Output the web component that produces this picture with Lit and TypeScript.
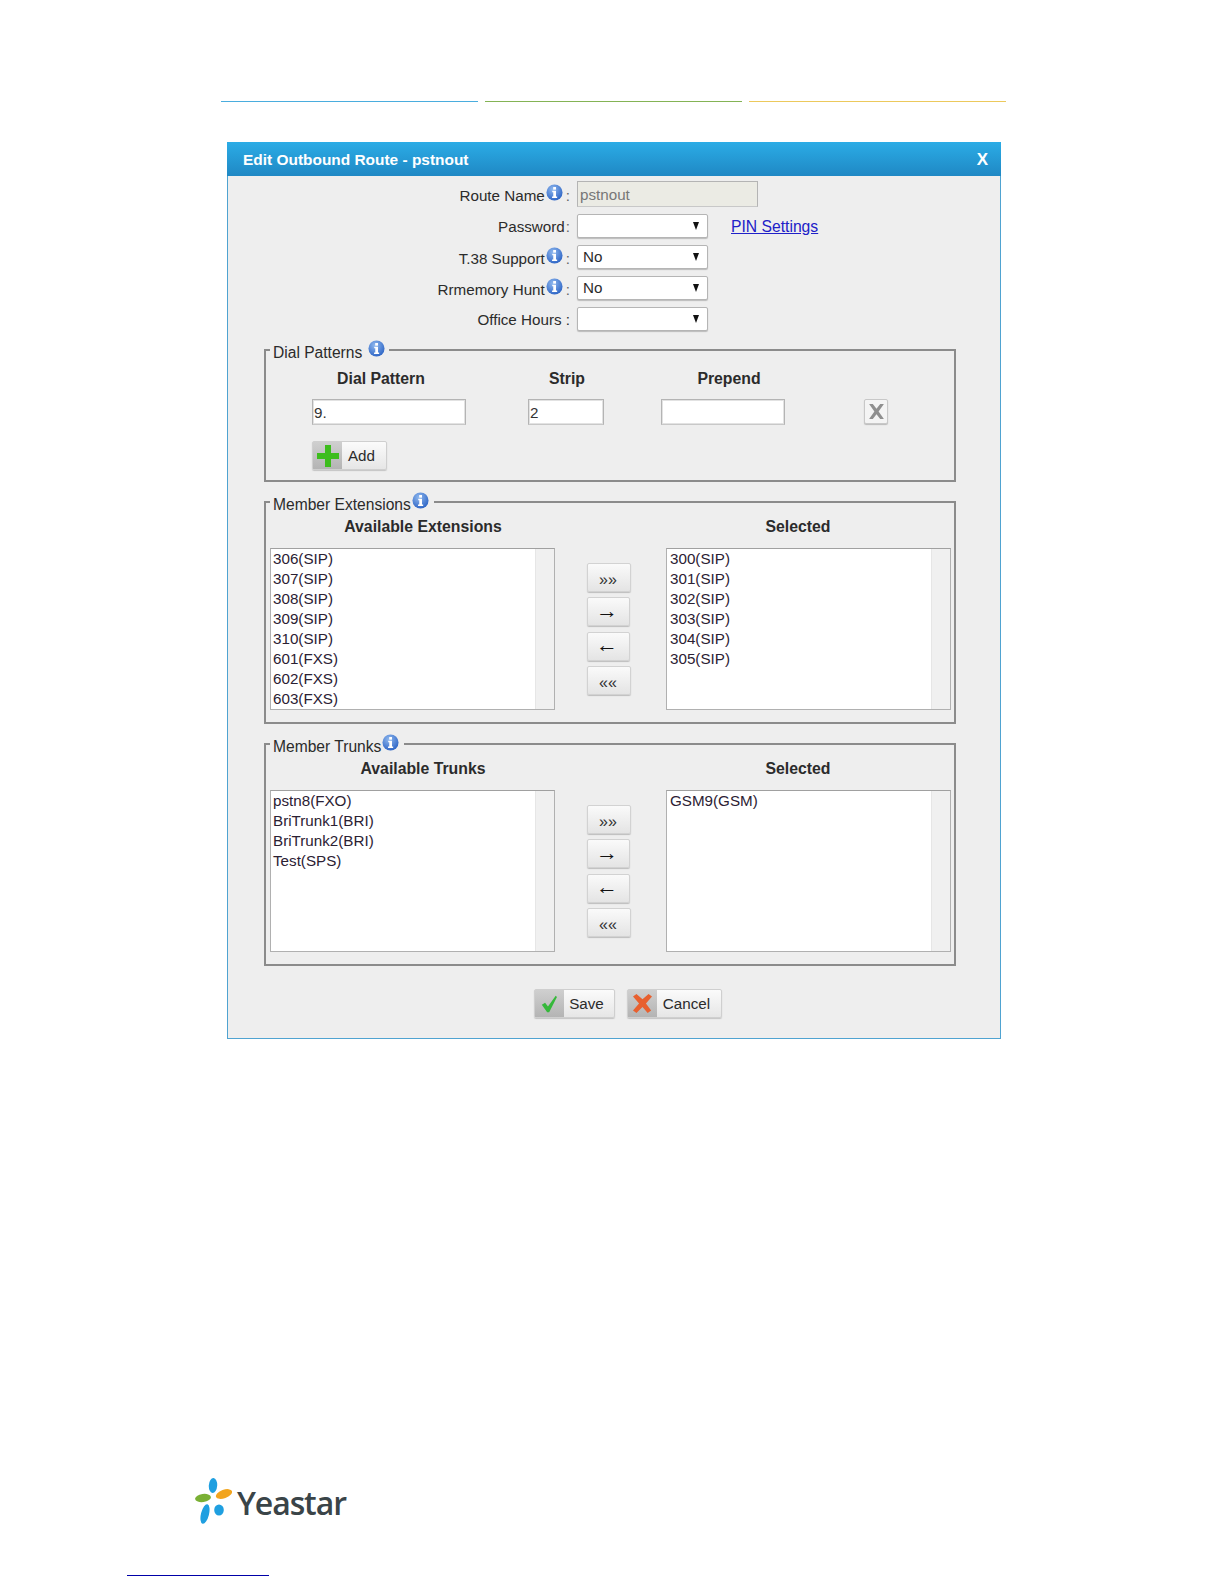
import { LitElement, html, css, svg } from "lit";
import { customElement } from "lit/decorators.js";

const info = html`<svg class="info" viewBox="0 0 18 18"><defs><radialGradient id="ig" cx="40%" cy="30%" r="75%"><stop offset="0" stop-color="#8fb8ee"/><stop offset="1" stop-color="#2a62c4"/></radialGradient></defs><circle cx="9" cy="9" r="8.500" fill="url(#ig)"/><rect x="7.600" y="3.200" width="3" height="2.800" fill="#fff"/><path d="M6.600 7.200h4v6h1.200v1.500H6.400v-1.500h1.300V8.700H6.600z" fill="#fff"/></svg>`;

const plus = svg`<path d="M8 0h6v8h8v6h-8v8H8v-8H0V8h8z" fill="#3dbd1d"/>`;
const check = svg`<path d="M1 12l4-2.500 3.500 4.500L18 1l1.500 1.500L10 21H7.500z" fill="#35b83a"/>`;
const cross = svg`<path d="M4 0l7 6 7-6 4 3-7 8 6 8-4 3-6-7-7 7-4-3 7-8-7-8z" fill="#e8602f"/>`;

const Select = (v = "") => html`<div class="select"><span>${v}</span><i class="caret"></i></div>`;

const IconBtn = (icon: unknown, label: string, cls: string, size = 22) => html`<button class="ibtn ${cls}">
  <span class="ico"><svg viewBox="0 0 22 22" width=${size} height=${size}>${icon}</svg></span><span class="lb">${label}</span></button>`;

const Picker = (h1: string, left: string[], right: string[]) => html`
  <div class="heads"><b class="h1">${h1}</b><b class="h2">Selected</b></div>
  <div class="picker">
    <div class="list"><div class="items">${left.map((t) => html`<div>${t}</div>`)}</div><div class="track"></div></div>
    <div class="moves">
      <button class="mv wide">»»</button><button class="mv arrow">→</button><button class="mv arrow">←</button><button class="mv wide">««</button>
    </div>
    <div class="list right"><div class="items">${right.map((t) => html`<div>${t}</div>`)}</div><div class="track"></div></div>
  </div>`;

@customElement("app-root")
export class AppRoot extends LitElement {
  static styles = css`
    :host { display: block; height: 1584px; overflow: hidden; background: #fff; font-family: "Liberation Sans", Arial, sans-serif; font-size: 15.2px; color: #2b2b2b; }
    .rules { display: flex; gap: 7px; margin-left: 221px; padding-top: 100px; }
    .rules i { display: block; width: 257px; box-sizing: border-box; height: 2px; border-bottom: 1px solid; opacity: .85; }
    .r1 { color: #2a9fd8; } .r2 { color: #6fa637; } .r3 { color: #e9bf3f; }
    .dialog { box-sizing: border-box; width: 774px; height: 897px; margin: 40px 0 0 227px; background: #eee; border: 1px solid #4fa3d1; border-top: 0; }
    .head { height: 34px; margin: 0 -1px; padding: 2px 13px 0 16px; box-sizing: border-box; display: flex; align-items: center; justify-content: space-between; background: linear-gradient(#2bace6, #1f88c4); color: #fff; font-weight: 700; font-size: 15.450px; }
    .head .x { font-size: 17px; }
    .form { display: grid; grid-template-columns: 342px 1fr; gap: 7px; padding-top: 5px; align-items: center; }
    .lab { display: flex; justify-content: flex-end; align-items: center; height: 24px; }
    .lab .t { position: relative; top: 1px; }
    .plain .t, .plain .colon { top: 0; }
    .info { width: 17px; height: 17px; flex: none; margin: -4px 2px 0 1px; }
    .colon { color: #666; margin-left: 1px; position: relative; top: 1px; }
    .ctl { display: flex; align-items: center; gap: 23px; }
    input { box-sizing: border-box; font: inherit; color: #333; border: 1px solid #b4b4b4; border-bottom-color: #c8c8c8; background: #fff; padding: 1px 1px; margin: 0; outline: 0; box-shadow: inset 0 0 0 1px #e2e2e2; }
    .route { width: 181px; height: 26px; background: #ebebe4; color: #777; box-shadow: none; padding: 1px 2px; }
    .select { box-sizing: border-box; width: 131px; height: 24px; background: #fff; border: 1px solid #b5b5b5; border-radius: 2px; box-shadow: 0 1px 1px #bbb; display: flex; align-items: center; justify-content: space-between; padding: 0 8px 0 5px; }
    .select span { position: relative; top: -1px; }
    .caret { width: 0; height: 0; border-left: 3.500px solid transparent; border-right: 3.500px solid transparent; border-top: 8px solid #111; }
    a { color: #2020c8; text-decoration: underline; font-size: 15.700px; padding-top: 2px; }
    fieldset { box-sizing: border-box; width: 692px; margin: 10px 0 0 36px; padding: 0 0 12px; border: 2px solid #8b8b8b; min-inline-size: 0; }
    .f1 { margin-top: 9px; padding-bottom: 10px; }
    legend { height: 20px; line-height: 20px; margin-left: 4px; padding: 0 3px; display: flex; align-items: center; font-size: 15.600px; }
    .f1 legend { padding-right: 2px; }
    .f1 legend .info { margin-left: 6px; }
    legend .t { position: relative; top: 3px; }
    .cols { display: flex; padding-top: 9px; font-weight: 700; line-height: 20px; font-size: 15.800px; }
    .cols b:nth-child(1) { width: 230px; text-align: center; }
    .cols b:nth-child(2) { width: 140px; text-align: center; position: relative; left: 1px; }
    .cols b:nth-child(3) { width: 120px; margin-left: 33px; text-align: center; }
    .vals { display: flex; align-items: flex-start; padding: 10px 0 0 46px; }
    .vals input { height: 26px; }
    .v1 { width: 154px; } .v2 { width: 76px; margin-left: 62px; } .v3 { width: 124px; margin-left: 57px; }
    .del { box-sizing: border-box; width: 24px; height: 25px; margin-left: 79px; padding: 0; background: #f4f4f4; border: 1px solid #c8c8c8; border-radius: 2px; box-shadow: 0 1px 1px #bbb; display: flex; align-items: center; justify-content: center; }
    .addrow { padding: 16px 0 0 46px; display: flex; }
    .ibtn { box-sizing: border-box; height: 29px; padding: 0; display: flex; align-items: stretch; font: inherit; color: #2b2b2b; background: linear-gradient(#fbfbfb, #e6e6e6); border: 1px solid #cfcfcf; border-radius: 2px; box-shadow: 0 1px 1px #c4c4c4; }
    .ico { width: 29px; display: flex; align-items: center; justify-content: center; background: linear-gradient(#cfcfcf, #b4b4b4); }
    .lb { flex: 1; display: flex; align-items: center; justify-content: center; padding: 0 5px 0 0; }
    .add { width: 75px; } .save { width: 81px; } .cancel { width: 95px; }
    .heads { display: flex; font-weight: 700; line-height: 20px; padding-top: 5px; font-size: 15.800px; }
    .h1 { width: 314px; text-align: center; }
    .h2 { width: 172px; margin-left: 132px; text-align: center; }
    .picker { display: flex; padding: 11px 0 0 4px; align-items: flex-start; }
    .list { box-sizing: border-box; width: 285px; height: 162px; display: flex; background: #fff; border: 1px solid #b0b0b0; border-top-color: #a0a0a0; overflow: hidden; }
    .items { flex: 1; padding-left: 2px; line-height: 20px; color: #2b2133; }
    .right .items { padding-left: 3px; }
    .track { width: 18px; background: #f0f0f0; border-left: 1px solid #e6e6e6; }
    .moves { width: 44px; margin: 15px 35px 0 32px; display: flex; flex-direction: column; align-items: flex-start; gap: 5.400px; }
    .mv { box-sizing: border-box; height: 29px; padding: 4px 2px 0 0; font: 16px "Liberation Sans", sans-serif; color: #333; background: linear-gradient(#fafafa, #e4e4e4); border: 1px solid #d2d2d2; border-radius: 2px; box-shadow: 0 1px 1px #bdbdbd; overflow: hidden; }
    .wide { width: 44px; } .arrow { width: 43px; font-size: 22px; line-height: 22px; color: #111; padding: 0 3px 2px 0; }
    .foot { display: flex; gap: 12px; padding: 23px 0 0 306px; }
    .logo { display: flex; margin: 439px 0 0 195px; height: 60px; }
    .logo svg { flex: none; width: 37px; height: 46px; }
    .word { font-family: "Open Sans", sans-serif; font-weight: 600; font-size: 32px; letter-spacing: -1.100px; line-height: 46px; color: #3a4448; margin: 2px 0 0 5px; height: 46px; }
    .mark { width: 142px; height: 1px; margin: 37px 0 0 127px; background: #0000a8; }
  `;

  render() {
    return html`
      <div class="rules"><i class="r1"></i><i class="r2"></i><i class="r3"></i></div>
      <section class="dialog">
        <header class="head"><span>Edit Outbound Route - pstnout</span><span class="x">X</span></header>
        <div class="form">
          <div class="lab"><span class="t">Route Name</span>${info}<span class="colon">:</span></div>
          <div class="ctl"><input class="route" .value=${"pstnout"} disabled /></div>
          <div class="lab plain"><span class="t">Password</span><span class="colon">:</span></div>
          <div class="ctl">${Select()}<a href="#">PIN Settings</a></div>
          <div class="lab"><span class="t">T.38 Support</span>${info}<span class="colon">:</span></div>
          <div class="ctl">${Select("No")}</div>
          <div class="lab"><span class="t">Rrmemory Hunt</span>${info}<span class="colon">:</span></div>
          <div class="ctl">${Select("No")}</div>
          <div class="lab plain"><span class="t">Office Hours :</span></div>
          <div class="ctl">${Select()}</div>
        </div>

        <fieldset class="f1">
          <legend><span class="t">Dial Patterns</span>${info}</legend>
          <div class="cols"><b>Dial Pattern</b><b>Strip</b><b>Prepend</b></div>
          <div class="vals">
            <input class="v1" .value=${"9."} /><input class="v2" .value=${"2"} /><input class="v3" />
            <button class="del" aria-label="Delete"><svg viewBox="0 0 18 18" width="19" height="19"><path d="M2 2h3.500L9 6.500 12.500 2H16l-5 7 5 7h-3.500L9 11.500 5.500 16H2l5-7z" fill="#8f8f8f"/></svg></button>
          </div>
          <div class="addrow">${IconBtn(plus, "Add", "add")}</div>
        </fieldset>

        <fieldset>
          <legend><span class="t">Member Extensions</span>${info}</legend>
          ${Picker("Available Extensions",
            ["306(SIP)", "307(SIP)", "308(SIP)", "309(SIP)", "310(SIP)", "601(FXS)", "602(FXS)", "603(FXS)"],
            ["300(SIP)", "301(SIP)", "302(SIP)", "303(SIP)", "304(SIP)", "305(SIP)"])}
        </fieldset>

        <fieldset>
          <legend><span class="t">Member Trunks</span>${info}</legend>
          ${Picker("Available Trunks", ["pstn8(FXO)", "BriTrunk1(BRI)", "BriTrunk2(BRI)", "Test(SPS)"], ["GSM9(GSM)"])}
        </fieldset>

        <div class="foot">${IconBtn(check, "Save", "save", 18)}${IconBtn(cross, "Cancel", "cancel", 19)}</div>
      </section>

      <div class="logo">
        <svg viewBox="0 0 37 46">
          <ellipse cx="18" cy="7.500" rx="4.200" ry="7.500" transform="rotate(4 18 7.500)" fill="#1f9fe0"/>
          <ellipse cx="29" cy="16" rx="8.500" ry="4.200" transform="rotate(-20 29 16)" fill="#f2a51f"/>
          <ellipse cx="8" cy="20" rx="8" ry="4" transform="rotate(-8 8 20)" fill="#7ab034"/>
          <ellipse cx="24" cy="32" rx="4.800" ry="5.600" fill="#1f9fe0"/>
          <ellipse cx="10" cy="36" rx="4" ry="10" transform="rotate(14 10 36)" fill="#1f9fe0"/>
        </svg>
        <span class="word">Yeastar</span>
      </div>
      <div class="mark"></div>
    `;
  }
}
